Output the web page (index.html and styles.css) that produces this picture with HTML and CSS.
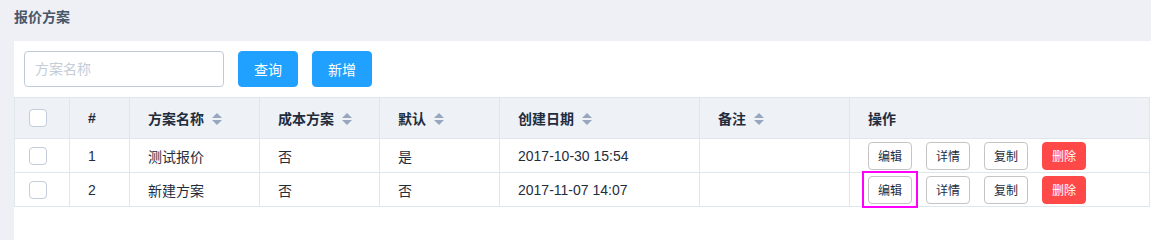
FILE: index.html
```html
<!DOCTYPE html>
<html lang="zh-CN">
<head>
<meta charset="utf-8">
<title>报价方案</title>
<link rel="stylesheet" href="styles.css">
</head>
<body>
<div class="page">
  <div class="title">报价方案</div>
  <div class="panel">
    <div class="toolbar">
      <input class="search" type="text" placeholder="方案名称">
      <button class="btn btn-primary">查询</button>
      <button class="btn btn-primary">新增</button>
    </div>
    <div class="grid">
      <div class="row head">
        <div class="cell sel"><span class="checkbox"></span></div>
        <div class="cell">#</div>
        <div class="cell">方案名称<span class="caret"><i class="up"></i><i class="down"></i></span></div>
        <div class="cell">成本方案<span class="caret"><i class="up"></i><i class="down"></i></span></div>
        <div class="cell">默认<span class="caret"><i class="up"></i><i class="down"></i></span></div>
        <div class="cell">创建日期<span class="caret"><i class="up"></i><i class="down"></i></span></div>
        <div class="cell">备注<span class="caret"><i class="up"></i><i class="down"></i></span></div>
        <div class="cell last">操作</div>
      </div>
      <div class="row">
        <div class="cell sel"><span class="checkbox"></span></div>
        <div class="cell">1</div>
        <div class="cell">测试报价</div>
        <div class="cell">否</div>
        <div class="cell">是</div>
        <div class="cell">2017-10-30 15:54</div>
        <div class="cell"></div>
        <div class="cell last ops">
          <button class="btn-sm">编辑</button>
          <button class="btn-sm">详情</button>
          <button class="btn-sm">复制</button>
          <button class="btn-sm danger">删除</button>
        </div>
      </div>
      <div class="row">
        <div class="cell sel"><span class="checkbox"></span></div>
        <div class="cell">2</div>
        <div class="cell">新建方案</div>
        <div class="cell">否</div>
        <div class="cell">否</div>
        <div class="cell">2017-11-07 14:07</div>
        <div class="cell"></div>
        <div class="cell last ops">
          <button class="btn-sm marked">编辑</button>
          <button class="btn-sm">详情</button>
          <button class="btn-sm">复制</button>
          <button class="btn-sm danger">删除</button>
        </div>
      </div>
    </div>
  </div>
</div>
</body>
</html>
```

FILE: styles.css
```css
* {
  box-sizing: border-box;
}

html, body {
  margin: 0;
  padding: 0;
  background: #eef0f6;
  font-family: "Liberation Sans", "Noto Sans CJK SC", sans-serif;
  color: #1f2d3d;
}

.page {
  display: flex;
  flex-direction: column;
  min-height: 100vh;
}

.title {
  height: 41px;
  padding: 9px 14px 0;
  font-size: 14px;
  line-height: 16px;
  font-weight: bold;
  color: #48576a;
}

.panel {
  flex: 1;
  margin-left: 14px;
  background: #fff;
}

.toolbar {
  display: flex;
  align-items: center;
  gap: 14px;
  padding: 10px;
}

.search {
  width: 200px;
  height: 36px;
  padding: 0 10px;
  border: 1px solid #bfcbd9;
  border-radius: 4px;
  font: 14px "Liberation Sans", "Noto Sans CJK SC", sans-serif;
  color: #1f2d3d;
  outline: none;
}

.search::placeholder {
  color: #c5cdd8;
}

.btn {
  width: 60px;
  height: 36px;
  border: 1px solid #20a0ff;
  border-radius: 4px;
  font: 14px "Liberation Sans", "Noto Sans CJK SC", sans-serif;
  padding: 0;
  cursor: pointer;
}

.btn-primary {
  background: #20a0ff;
  color: #fff;
}

.grid {
  width: 1136px;
  border: 1px solid #dfe6ec;
  border-bottom: none;
}

.row {
  display: grid;
  grid-template-columns: 55px 60px 130px 120px 120px 200px 150px 1fr;
  height: 34px;
  border-bottom: 1px solid #dfe6ec;
  font-size: 14px;
}

.row.head {
  height: 41px;
  background: #eef1f6;
  font-weight: bold;
}

.cell {
  display: flex;
  align-items: center;
  padding-left: 18px;
  border-right: 1px solid #dfe6ec;
  white-space: nowrap;
}

.cell.last {
  border-right: none;
}

.cell.sel {
  padding-left: 14px;
}

.checkbox {
  display: inline-block;
  width: 18px;
  height: 18px;
  border: 1px solid #c3cdd9;
  border-radius: 4px;
  background: #fff;
}

.caret {
  display: inline-flex;
  flex-direction: column;
  justify-content: space-between;
  width: 10px;
  height: 12px;
  margin-left: 8px;
  margin-top: 1px;
}

.caret i {
  display: block;
  width: 0;
  height: 0;
  border-left: 5px solid transparent;
  border-right: 5px solid transparent;
}

.caret .up {
  border-bottom: 5px solid #97a8be;
}

.caret .down {
  border-top: 5px solid #97a8be;
}

.ops {
  gap: 14px;
}

.btn-sm {
  position: relative;
  width: 44px;
  height: 28px;
  padding: 0;
  border: 1px solid #c4c4c4;
  border-radius: 4px;
  background: #fff;
  color: #1f2d3d;
  font: 12px "Liberation Sans", "Noto Sans CJK SC", sans-serif;
  cursor: pointer;
}

.btn-sm.danger {
  background: #ff4949;
  border-color: #ff4949;
  color: #fff;
}

.btn-sm.marked::after {
  content: "";
  position: absolute;
  left: -7px;
  right: -7px;
  top: -6px;
  bottom: -5px;
  border: 2px solid #f0f;
}
```
